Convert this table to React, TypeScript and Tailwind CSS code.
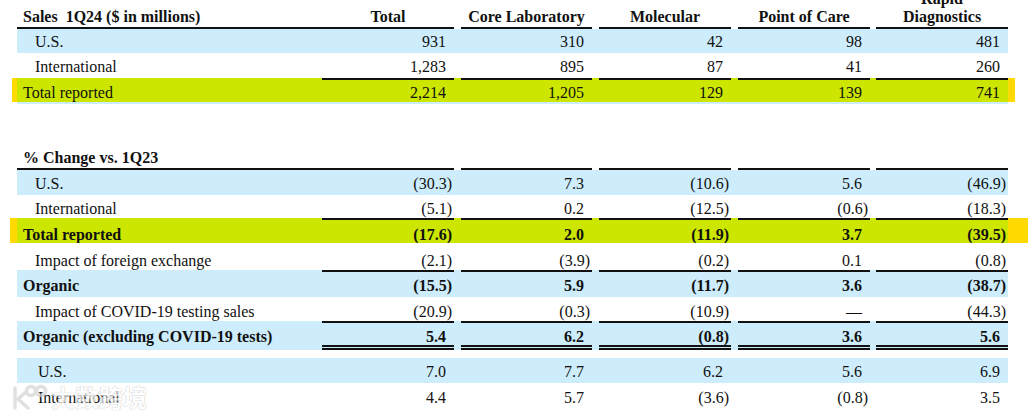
import React from 'react';

type Tone = 'blue' | 'green' | 'white';

interface RowProps {
  label: string;
  values: string[];
  tone: Tone;
  h: string;
  bold?: boolean;
  indent?: string;
  pt?: string;
  topLine?: boolean;
  doubleLine?: boolean;
  marker?: 'small' | 'wide';
}

// widths of the five number columns, with the white gaps between them
const cols = [
  { w: 'w-[132px]', ml: 'ml-0' },
  { w: 'w-[131px]', ml: 'ml-[7px]' },
  { w: 'w-[132px]', ml: 'ml-[7px]' },
  { w: 'w-[132px]', ml: 'ml-[7px]' },
  { w: 'w-[132px]', ml: 'ml-[6px]' },
];

const toneBg: Record<Tone, string> = {
  blue: 'bg-[#cdecfc]',
  green: 'bg-[#cce600]',
  white: 'bg-white',
};

const Num = ({ v }: { v: string }) => {
  const neg = v.startsWith('(');
  return <span className={neg ? 'mr-[-6px]' : ''}>{v}</span>;
};

const Row = ({ label, values, tone, h, bold, indent = 'pl-[18px]', pt = 'pt-[2px]', topLine, doubleLine, marker }: RowProps) => {
  const top = topLine ? 'border-t-2' : '';
  const bottom = doubleLine ? 'border-b-[5px] border-double' : '';
  return (
    <div className={`relative flex ${h} ${toneBg[tone]} ${bold ? 'font-bold' : ''}`}>
      {marker === 'small' && (
        <>
          <span className="absolute left-[-5px] top-0 h-full w-[5px] bg-[#ffd900]" />
          <span className="absolute right-[-7px] top-0 h-full w-[7px] bg-[#ffd900]" />
        </>
      )}
      {marker === 'wide' && (
        <>
          <span className="absolute left-[-7px] top-0 h-full w-[7px] bg-[#ffd900]" />
          <span className="absolute right-[-20px] top-0 h-full w-[20px] bg-[#ffd900]" />
        </>
      )}
      <div className={`flex w-[305px] items-center ${pt} ${indent} border-transparent ${top} ${bottom}`}>{label}</div>
      {values.map((v, i) => (
        <div
          key={i}
          className={`flex items-center justify-end ${pt} pr-[8px] border-[#111] ${cols[i].w} ${cols[i].ml} ${top} ${bottom}`}
        >
          <Num v={v} />
        </div>
      ))}
    </div>
  );
};

const headers = ['Total', 'Core Laboratory', 'Molecular', 'Point of Care'];

const Watermark = () => (
  <div className="absolute left-[8px] top-[382px] flex items-center gap-[3px] opacity-70">
    <svg width="40" height="30" viewBox="0 0 40 30" fill="none" stroke="#d4d4d4" strokeWidth="3.5" strokeLinecap="round">
      <path d="M7 6 L7 26" />
      <path d="M19 9 L10 17 L20 26" />
      <circle cx="23" cy="9" r="4.5" />
      <circle cx="33" cy="9" r="4.5" />
    </svg>
    <span
      className="text-[24px] font-bold leading-none text-white"
      style={{
        fontFamily: '"Noto Sans CJK SC", sans-serif',
        textShadow: '0 0 1px #b0b0b0, 0 0 1px #b0b0b0',
      }}
    >
      大数跨境
    </span>
  </div>
);

export default function App() {
  return (
    <div className="relative h-[416px] w-[1032px] overflow-hidden bg-white font-['Liberation_Serif',serif] text-[16px] leading-[18px] text-[#111]">
      <div className="ml-[17px] mt-[-9px] w-[991px]">
        {/* Sales table */}
        <div className="flex h-[38px] font-bold">
          <div className="flex w-[305px] items-end whitespace-pre border-b-2 border-[#111] pb-[1px] pl-[6px]">
            Sales  1Q24 ($ in millions)
          </div>
          {headers.map((t, i) => (
            <div
              key={t}
              className={`flex items-end justify-center border-b-2 border-[#111] pb-[1px] ${cols[i].w} ${cols[i].ml}`}
            >
              {t}
            </div>
          ))}
          <div className={`flex flex-col items-center justify-end border-b-2 border-[#111] pb-[1px] ${cols[4].w} ${cols[4].ml}`}>
            <span>Rapid</span>
            <span>Diagnostics</span>
          </div>
        </div>
        <Row label="U.S." values={['931', '310', '42', '98', '481']} tone="blue" h="h-[24px]" />
        <Row label="International" values={['1,283', '895', '87', '41', '260']} tone="white" h="h-[25px]" />
        <Row
          label="Total reported"
          values={['2,214', '1,205', '129', '139', '741']}
          tone="green"
          h="h-[24px]"
          indent="pl-[6px]"
          pt="pt-[4px]"
          topLine
          marker="small"
        />
        <div className="h-[2px] bg-[#cdecfc]" />

        <div className="h-[42px]" />

        {/* % change table */}
        <div className="flex h-[24px] font-bold">
          <div className="flex w-[305px] items-end border-b-2 border-[#111] pb-[1px] pl-[6px]">% Change vs. 1Q23</div>
          {cols.map((c, i) => (
            <div key={i} className={`border-b-2 border-[#111] ${c.w} ${c.ml}`} />
          ))}
        </div>
        <Row label="U.S." values={['(30.3)', '7.3', '(10.6)', '5.6', '(46.9)']} tone="blue" h="h-[25px]" />
        <Row label="International" values={['(5.1)', '0.2', '(12.5)', '(0.6)', '(18.3)']} tone="white" h="h-[23px]" pt="pt-[4px]" />
        <Row
          label="Total reported"
          values={['(17.6)', '2.0', '(11.9)', '3.7', '(39.5)']}
          tone="green"
          h="h-[25px]"
          bold
          indent="pl-[6px]"
          pt="pt-[7px]"
          topLine
          marker="wide"
        />
        <Row
          label="Impact of foreign exchange"
          values={['(2.1)', '(3.9)', '(0.2)', '0.1', '(0.8)']}
          tone="white"
          h="h-[27px]"
          pt="pt-[9px]"
        />
        <Row
          label="Organic"
          values={['(15.5)', '5.9', '(11.7)', '3.6', '(38.7)']}
          tone="blue"
          h="h-[27px]"
          bold
          indent="pl-[6px]"
          pt="pt-[3px]"
          topLine
        />
        <Row
          label="Impact of COVID-19 testing sales"
          values={['(20.9)', '(0.3)', '(10.9)', '—', '(44.3)']}
          tone="white"
          h="h-[24px]"
          pt="pt-[5px]"
        />
        <Row
          label="Organic (excluding COVID-19 tests)"
          values={['5.4', '6.2', '(0.8)', '3.6', '5.6']}
          tone="blue"
          h="h-[29px]"
          bold
          indent="pl-[6px]"
          pt="pt-[5px]"
          topLine
          doubleLine
        />
        <div className="h-[8px]" />
        <Row label="U.S." values={['7.0', '7.7', '6.2', '5.6', '6.9']} tone="blue" h="h-[25px]" indent="pl-[21px]" />
        <Row
          label="International"
          values={['4.4', '5.7', '(3.6)', '(0.8)', '3.5']}
          tone="white"
          h="h-[25px]"
          indent="pl-[21px]"
          pt="pt-[4px]"
        />
      </div>
      <Watermark />
    </div>
  );
}
